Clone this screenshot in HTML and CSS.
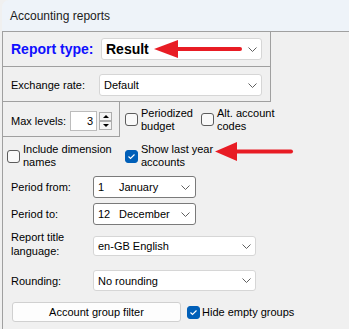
FILE: index.html
```html
<!DOCTYPE html>
<html>
<head>
<meta charset="utf-8">
<link rel="stylesheet" href="styles.css">
</head>
<body>
<div class="window">
  <div class="titlebar">Accounting reports</div>
  <div class="content">
    <div class="box box-wide box-type">
      <span class="lbl lbl-type">Report type:</span>
      <div class="select select-type"><span class="val">Result</span><svg class="chev" width="9" height="5" viewBox="0 0 9 5"><polyline points="0.5,0.5 4.5,4.5 8.5,0.5"/></svg></div>
    </div>
    <div class="box box-wide box-rate">
      <span class="lbl lbl-rate">Exchange rate:</span>
      <div class="select select-rate"><span class="val">Default</span><svg class="chev" width="9" height="5" viewBox="0 0 9 5"><polyline points="0.5,0.5 4.5,4.5 8.5,0.5"/></svg></div>
    </div>
    <div class="levels-row">
      <div class="box box-levels">
        <span class="lbl lbl-levels">Max levels:</span>
        <div class="num">3</div>
        <div class="spin">
          <div class="spin-btn"><span class="tri-up"></span></div>
          <div class="spin-btn"><span class="tri-down"></span></div>
        </div>
      </div>
      <div class="check check-periodized"><span class="cb"></span><span class="ctext">Periodized<br>budget</span></div>
      <div class="check"><span class="cb"></span><span class="ctext">Alt. account<br>codes</span></div>
    </div>
    <div class="dim-row">
      <div class="check check-include"><span class="cb"></span><span class="ctext">Include dimension<br>names</span></div>
      <div class="check"><span class="cb on"><svg width="11" height="11" viewBox="0 0 11 11"><polyline points="2.5,5.5 4.5,7.5 8.5,3.5"/></svg></span><span class="ctext">Show last year<br>accounts</span></div>
    </div>
    <div class="frow frow-from">
      <span class="flbl">Period from:</span>
      <div class="select select-period"><span class="pnum">1</span><span class="val">January</span><svg class="chev" width="9" height="5" viewBox="0 0 9 5"><polyline points="0.5,0.5 4.5,4.5 8.5,0.5"/></svg></div>
    </div>
    <div class="frow frow-to">
      <span class="flbl">Period to:</span>
      <div class="select select-period"><span class="pnum">12</span><span class="val">December</span><svg class="chev" width="9" height="5" viewBox="0 0 9 5"><polyline points="0.5,0.5 4.5,4.5 8.5,0.5"/></svg></div>
    </div>
    <div class="frow frow-lang">
      <span class="flbl flbl-two">Report title<br>language:</span>
      <div class="select select-long select-lang"><span class="val">en-GB English</span><svg class="chev" width="9" height="5" viewBox="0 0 9 5"><polyline points="0.5,0.5 4.5,4.5 8.5,0.5"/></svg></div>
    </div>
    <div class="frow frow-round">
      <span class="flbl">Rounding:</span>
      <div class="select select-long select-round"><span class="val">No rounding</span><svg class="chev" width="9" height="5" viewBox="0 0 9 5"><polyline points="0.5,0.5 4.5,4.5 8.5,0.5"/></svg></div>
    </div>
    <div class="btn-row">
      <div class="btn">Account group filter</div>
      <div class="check check-hide"><span class="cb on"><svg width="11" height="11" viewBox="0 0 11 11"><polyline points="2.5,5.5 4.5,7.5 8.5,3.5"/></svg></span><span class="ctext">Hide empty groups</span></div>
    </div>
  </div>
</div>
<svg class="arrows" width="349" height="329" viewBox="0 0 349 329">
  <line x1="174" y1="49" x2="240" y2="49"/>
  <polygon points="154,49 178,40 178,58"/>
  <line x1="234" y1="151.5" x2="291" y2="151.5"/>
  <polygon points="215,151.5 237,142 237,161"/>
</svg>
</body>
</html>
```

FILE: styles.css
```css
* { box-sizing: border-box; }
html, body { margin: 0; padding: 0; }
body {
  width: 349px;
  height: 329px;
  overflow: hidden;
  position: relative;
  background: #f0f0f0;
  font-family: "Liberation Sans", Arial, sans-serif;
  font-size: 11px;
  color: #000;
}
.window { margin-left: 2px; height: 329px; }
.titlebar {
  height: 31px;
  background: #eef3f9;
  border-top-left-radius: 7px;
  padding-left: 8px;
  display: flex;
  align-items: center;
  font-size: 12px;
  color: #1b1b1b;
}
.content {
  height: 298px;
  border-top: 1px solid #a0a0a0;
  border-left: 1px solid #a0a0a0;
  background: #f0f0f0;
}
.box {
  height: 35px;
  border-right: 1px solid #a0a0a0;
  border-bottom: 1px solid #a0a0a0;
  display: flex;
  padding-left: 8px;
}
.box-wide { width: 268px; }
.box-type { align-items: center; }
.box-rate { align-items: flex-start; padding-top: 7px; }
.lbl { line-height: 22px; white-space: nowrap; }
.lbl-type { width: 90px; color: #1010ff; font-weight: bold; font-size: 14px; }
.lbl-rate { width: 88px; }
.select {
  height: 22px;
  background: #fff;
  border: 1px solid #d6d6d6;
  border-radius: 3px;
  display: flex;
  align-items: center;
  padding: 0 4px 0 4px;
  white-space: nowrap;
}
.select .val { flex: 1; }
.chev { flex: none; }
.chev polyline { fill: none; stroke: #5f5f5f; stroke-width: 1; }
.select-type { width: 161px; padding-left: 4px; }
.select-type .val { font-weight: bold; font-size: 14px; }
.select-rate { width: 163px; }
.levels-row { display: flex; align-items: center; }
.box-levels { width: 117px; align-items: flex-start; padding-top: 9px; }
.lbl-levels { width: 59px; line-height: 20px; }
.num {
  width: 27px;
  height: 20px;
  background: #fff;
  border: 1px solid #bcbcbc;
  text-align: right;
  padding-right: 3px;
  line-height: 18px;
}
.spin { margin-left: 2px; margin-top: 1px; width: 13px; display: flex; flex-direction: column; }
.spin-btn {
  height: 9px;
  border: 1px solid #adadad;
  background: #f4f4f4;
  display: flex;
  align-items: center;
  justify-content: center;
}
.tri-up { width: 0; height: 0; border-left: 3px solid transparent; border-right: 3px solid transparent; border-bottom: 3px solid #000; }
.tri-down { width: 0; height: 0; border-left: 3px solid transparent; border-right: 3px solid transparent; border-top: 3px solid #000; }
.check { display: flex; align-items: center; line-height: 13px; white-space: nowrap; }
.cb {
  width: 13px;
  height: 13px;
  flex: none;
  border: 1px solid #5c5c5c;
  border-radius: 3px;
  background: #f9f9f9;
  margin-right: 3px;
  display: flex;
  align-items: center;
  justify-content: center;
}
.cb.on { background: #005fb8; border-color: #005fb8; }
.cb svg polyline { fill: none; stroke: #fff; stroke-width: 1.1; }
.check-periodized { margin-left: 5px; width: 76px; }
.dim-row { display: flex; align-items: center; margin-top: 6px; }
.check-include { margin-left: 4px; width: 118px; }
.frow { display: flex; align-items: center; padding-left: 8px; }
.flbl { width: 82px; white-space: nowrap; }
.frow-from { margin-top: 7px; }
.frow-to { margin-top: 5px; }
.select-period { width: 103px; border-color: #7a7a7a; padding-right: 5px; }
.pnum { width: 21px; }
.frow-lang { margin-top: 5px; align-items: flex-start; }
.flbl-two { line-height: 14px; }
.select-long { width: 163px; }
.select-lang { height: 20px; margin-top: 6px; }
.frow-round { margin-top: 12px; }
.select-round { height: 21px; }
.btn-row { display: flex; align-items: center; margin-top: 11px; padding-left: 9px; }
.btn {
  width: 169px;
  height: 20px;
  background: #fdfdfd;
  border: 1px solid #d0d0d0;
  border-radius: 3px;
  display: flex;
  align-items: center;
  justify-content: center;
}
.check-hide { margin-left: 6px; }
.check-hide .cb { margin-right: 2px; }
.arrows { position: absolute; left: 0; top: 0; pointer-events: none; }
.arrows line { stroke: #e81c24; stroke-width: 4; stroke-linecap: round; }
.arrows polygon { fill: #e81c24; }
```
